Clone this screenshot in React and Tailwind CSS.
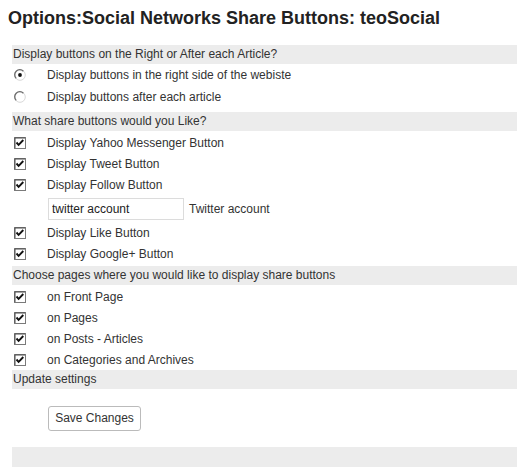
import React from "react";

function Check() {
  return (
    <svg width="12" height="12" viewBox="0 0 12 12" className="block">
      <rect x="0.5" y="0.5" width="11" height="11" fill="#ffffff" stroke="#7a7a7a" />
      <path d="M1 1 H11 M1 1 V11" stroke="#4a4a4a" strokeWidth="1" fill="none" />
      <path d="M2.5 5.5 L4.6 7.8 L9.3 3" stroke="#111" strokeWidth="1.9" fill="none" />
    </svg>
  );
}

function Radio({ on }) {
  return (
    <svg width="12" height="12" viewBox="0 0 12 12" className="block">
      <circle cx="6" cy="6" r="5.3" fill="#ffffff" stroke="#d8d8d8" strokeWidth="1" />
      <path d="M2.2 9.4 A5 5 0 0 1 9.4 2.2" stroke="#6b6b6b" strokeWidth="1.3" fill="none" />
      {on && <circle cx="6" cy="6" r="1.9" fill="#111" />}
    </svg>
  );
}

function Header({ children, className = "" }) {
  return (
    <div className={"h-[19px] bg-[#ececec] pl-[1px] text-[12px] leading-[19px] text-[#333] " + className}>
      {children}
    </div>
  );
}

function Row({ h = "h-[21px]", icon, children }) {
  return (
    <div className={"flex items-center " + h}>
      <div className="w-[35px] pl-[2px]">{icon}</div>
      <span className="text-[12px] text-[#333]">{children}</span>
    </div>
  );
}

export default function App() {
  return (
    <div className="w-[531px] h-[471px] bg-white overflow-hidden" style={{ fontFamily: '"Liberation Sans", Arial, sans-serif' }}>
      <h2 className="pl-[8px] pt-[7px] h-[45px] text-[18px] leading-[22px] font-bold text-[#222]">
        Options:Social Networks Share Buttons: teoSocial
      </h2>
      <div className="ml-[12px] w-[505px]">
        <Header>Display buttons on the Right or After each Article?</Header>
        <Row h="h-[22px]" icon={<Radio on />}>Display buttons in the right side of the webiste</Row>
        <Row h="h-[22px]" icon={<Radio />}>Display buttons after each article</Row>
        <Header className="mt-[4px]">What share buttons would you Like?</Header>
        <div className="h-[1px]" />
        <Row icon={<Check />}>Display Yahoo Messenger Button</Row>
        <Row icon={<Check />}>Display Tweet Button</Row>
        <Row icon={<Check />}>Display Follow Button</Row>
        <div className="flex h-[27px] items-center pl-[36px]">
          <input
            readOnly
            value="twitter account"
            className="h-[22px] w-[136px] border border-[#dcdcdc] px-[3px] text-[12px] text-[#222] outline-none"
            style={{ fontFamily: '"Liberation Sans", Arial, sans-serif' }}
          />
          <span className="ml-[5px] text-[12px] text-[#333]">Twitter account</span>
        </div>
        <Row icon={<Check />}>Display Like Button</Row>
        <Row icon={<Check />}>Display Google+ Button</Row>
        <Header className="mt-[2px]">Choose pages where you would like to display share buttons</Header>
        <div className="h-[1px]" />
        <Row icon={<Check />}>on Front Page</Row>
        <Row icon={<Check />}>on Pages</Row>
        <Row icon={<Check />}>on Posts - Articles</Row>
        <Row icon={<Check />}>on Categories and Archives</Row>
        <Header>Update settings</Header>
        <div className="pl-[36px] pt-[16px] pb-[16px]">
          <button className="h-[25px] w-[93px] rounded-[3px] border border-[#bbbbbb] bg-white text-[12px] text-[#333]">
            Save Changes
          </button>
        </div>
        <div className="h-[20px] bg-[#ececec]" />
      </div>
    </div>
  );
}
